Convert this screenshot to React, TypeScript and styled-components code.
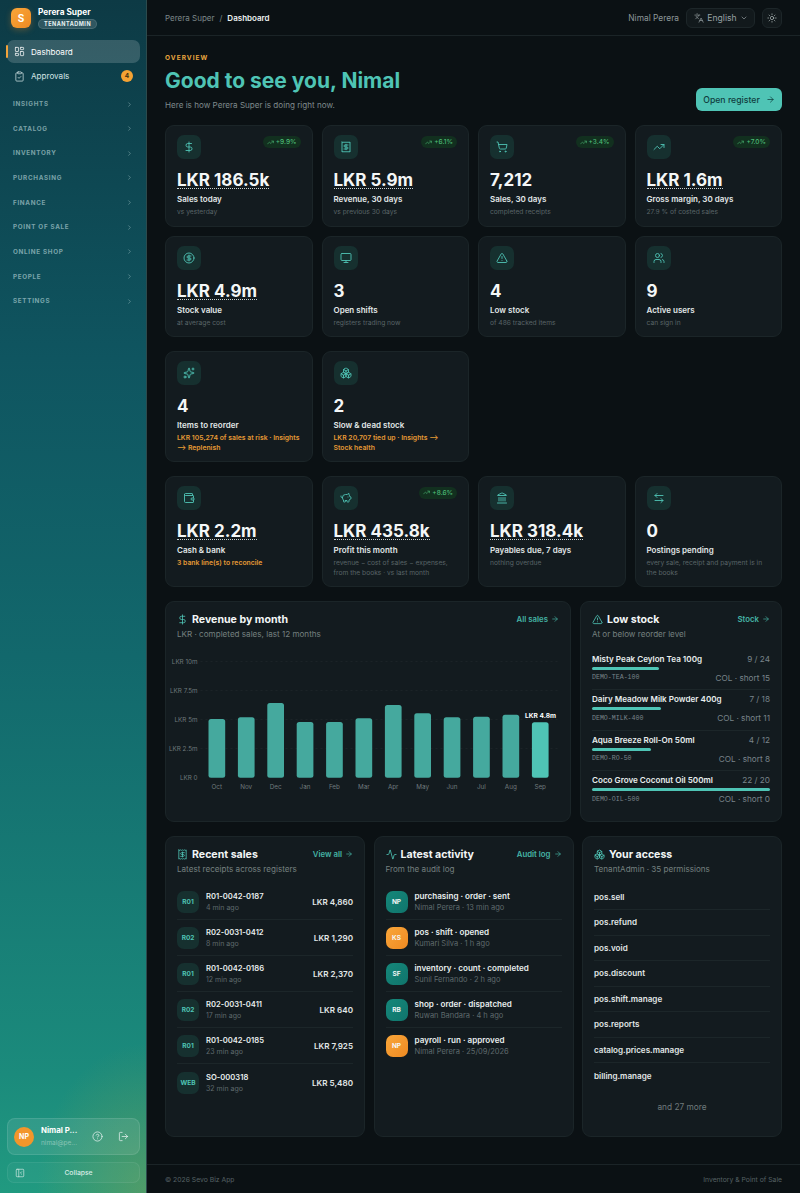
import styled, { createGlobalStyle } from "styled-components";
import {
  Activity,
  ArrowLeftRight,
  ArrowRight,
  Boxes,
  ChevronDown,
  ChevronRight,
  CircleDollarSign,
  CircleHelp,
  ClipboardCheck,
  DollarSign,
  Landmark,
  Languages,
  LayoutDashboard,
  LogOut,
  Monitor,
  PanelLeftClose,
  PiggyBank,
  Receipt,
  ShoppingCart,
  Sparkles,
  Sun,
  TrendingUp,
  TriangleAlert,
  Users,
  Wallet,
} from "lucide-react";

const GlobalStyle = createGlobalStyle`
  html, body { margin: 0; padding: 0; background: #0b1114; }
  body {
    font-family: Inter, "Noto Sans", "Liberation Sans", sans-serif;
    color: #e8eeee;
  }
  * { box-sizing: border-box; }
`;

const navGroups = [
  "Insights",
  "Catalog",
  "Inventory",
  "Purchasing",
  "Finance",
  "Point of sale",
  "Online shop",
  "People",
  "Settings",
];

const topStats = [
  { icon: DollarSign, value: "LKR 186.5k", money: true, label: "Sales today", sub: "vs yesterday", trend: "+9.9%" },
  { icon: Receipt, value: "LKR 5.9m", money: true, label: "Revenue, 30 days", sub: "vs previous 30 days", trend: "+6.1%" },
  { icon: ShoppingCart, value: "7,212", label: "Sales, 30 days", sub: "completed receipts", trend: "+3.4%" },
  { icon: TrendingUp, value: "LKR 1.6m", money: true, label: "Gross margin, 30 days", sub: "27.9 % of costed sales", trend: "+7.0%" },
  { icon: CircleDollarSign, value: "LKR 4.9m", money: true, label: "Stock value", sub: "at average cost" },
  { icon: Monitor, value: "3", label: "Open shifts", sub: "registers trading now" },
  { icon: TriangleAlert, value: "4", label: "Low stock", sub: "of 486 tracked items" },
  { icon: Users, value: "9", label: "Active users", sub: "can sign in" },
];

const insightStats = [
  { icon: Sparkles, value: "4", label: "Items to reorder", sub: "LKR 105,274 of sales at risk · Insights ⟶ Replenish", warn: true },
  { icon: Boxes, value: "2", label: "Slow & dead stock", sub: "LKR 20,707 tied up · Insights ⟶ Stock health", warn: true },
];

const financeStats = [
  { icon: Wallet, value: "LKR 2.2m", money: true, label: "Cash & bank", sub: "3 bank line(s) to reconcile", warn: true },
  { icon: PiggyBank, value: "LKR 435.8k", money: true, label: "Profit this month", sub: "revenue − cost of sales − expenses, from the books · vs last month", trend: "+8.6%" },
  { icon: Landmark, value: "LKR 318.4k", money: true, label: "Payables due, 7 days", sub: "nothing overdue" },
  { icon: ArrowLeftRight, value: "0", label: "Postings pending", sub: "every sale, receipt and payment is in the books" },
];

const bars = [
  { month: "Oct", top: 719 },
  { month: "Nov", top: 717.3 },
  { month: "Dec", top: 703 },
  { month: "Jan", top: 722 },
  { month: "Feb", top: 722 },
  { month: "Mar", top: 718.3 },
  { month: "Apr", top: 705 },
  { month: "May", top: 713.3 },
  { month: "Jun", top: 717.3 },
  { month: "Jul", top: 716.7 },
  { month: "Aug", top: 714.7 },
  { month: "Sep", top: 722.3 },
];

const axis = [
  { label: "LKR 10m", y: 661.5 },
  { label: "LKR 7.5m", y: 690.5 },
  { label: "LKR 5m", y: 719.5 },
  { label: "LKR 2.5m", y: 748.5 },
  { label: "LKR 0", y: 777.5 },
];

const lowStock = [
  { name: "Misty Peak Ceylon Tea 100g", count: "9 / 24", sku: "DEMO-TEA-100", short: "COL · short 15", ratio: 9 / 24 },
  { name: "Dairy Meadow Milk Powder 400g", count: "7 / 18", sku: "DEMO-MILK-400", short: "COL · short 11", ratio: 7 / 18 },
  { name: "Aqua Breeze Roll-On 50ml", count: "4 / 12", sku: "DEMO-RO-50", short: "COL · short 8", ratio: 4 / 12 },
  { name: "Coco Grove Coconut Oil 500ml", count: "22 / 20", sku: "DEMO-OIL-500", short: "COL · short 0", ratio: 1 },
];

const sales = [
  { reg: "R01", no: "R01-0042-0187", ago: "4 min ago", total: "LKR 4,860" },
  { reg: "R02", no: "R02-0031-0412", ago: "8 min ago", total: "LKR 1,290" },
  { reg: "R01", no: "R01-0042-0186", ago: "12 min ago", total: "LKR 2,370" },
  { reg: "R02", no: "R02-0031-0411", ago: "17 min ago", total: "LKR 640" },
  { reg: "R01", no: "R01-0042-0185", ago: "23 min ago", total: "LKR 7,925" },
  { reg: "WEB", no: "SO-000318", ago: "32 min ago", total: "LKR 5,480" },
];

const activity = [
  { initials: "NP", tone: "teal", what: "purchasing · order · sent", who: "Nimal Perera · 13 min ago" },
  { initials: "KS", tone: "amber", what: "pos · shift · opened", who: "Kumari Silva · 1 h ago" },
  { initials: "SF", tone: "teal", what: "inventory · count · completed", who: "Sunil Fernando · 2 h ago" },
  { initials: "RB", tone: "teal", what: "shop · order · dispatched", who: "Ruwan Bandara · 4 h ago" },
  { initials: "NP", tone: "amber", what: "payroll · run · approved", who: "Nimal Perera · 25/09/2026" },
];

const permissions = [
  "pos.sell",
  "pos.refund",
  "pos.void",
  "pos.discount",
  "pos.shift.manage",
  "pos.reports",
  "catalog.prices.manage",
  "billing.manage",
];

type Stat = {
  icon: typeof DollarSign;
  value: string;
  money?: boolean;
  label: string;
  sub: string;
  trend?: string;
  warn?: boolean;
};

const StatCard = ({ icon: Icon, value, money, label, sub, trend, warn }: Stat) => (
  <Card>
    <CardTop>
      <IconTile>
        <Icon size={12} strokeWidth={1.8} />
      </IconTile>
      {trend && (
        <Trend>
          <TrendingUp size={7} strokeWidth={2} />
          {trend}
        </Trend>
      )}
    </CardTop>
    <Value $money={money}>{value}</Value>
    <Label>{label}</Label>
    <Sub $warn={warn}>{sub}</Sub>
  </Card>
);

const PanelHeader = ({
  icon: Icon,
  title,
  sub,
  link,
}: {
  icon: typeof DollarSign;
  title: string;
  sub: string;
  link?: string;
}) => (
  <PanelHead>
    <div>
      <PanelTitle>
        <Icon size={11} strokeWidth={1.8} />
        {title}
      </PanelTitle>
      <PanelSub>{sub}</PanelSub>
    </div>
    {link && (
      <PanelLink>
        {link}
        <ArrowRight size={8} strokeWidth={2} />
      </PanelLink>
    )}
  </PanelHead>
);

const RevenueChart = () => (
  <ChartSvg viewBox="165.5 650 405 160" width="405" height="160">
    {axis.map((a) => (
      <g key={a.label}>
        {a.label !== "LKR 0" && (
          <line x1="200" x2="560" y1={a.y} y2={a.y} stroke="#ffffff" strokeOpacity="0.04" strokeDasharray="2 3" />
        )}
        <text x="197" y={a.y + 2.3} textAnchor="end" fontSize="6.3" fill="#6f7a7c">
          {a.label}
        </text>
      </g>
    ))}
    {bars.map((b, i) => {
      const x = 208 + i * 29.4;
      const last = i === bars.length - 1;
      return (
        <g key={b.month}>
          <rect x={x} y={b.top} width="16.7" height={777.7 - b.top} rx="2.5" fill={last ? "#4fc4b5" : "#45a99e"} />
          <text x={x + 8.3} y="789.3" textAnchor="middle" fontSize="6.3" fill="#6f7a7c">
            {b.month}
          </text>
        </g>
      );
    })}
    <text x="540" y="718" textAnchor="middle" fontSize="6.6" fontWeight="700" fill="#ffffff">
      LKR 4.8m
    </text>
  </ChartSvg>
);

export default function App() {
  return (
    <>
      <GlobalStyle />
      <Shell>
        <Sidebar>
          <Brand>
            <BrandMark>S</BrandMark>
            <div>
              <BrandName>Perera Super</BrandName>
              <RoleBadge>TENANTADMIN</RoleBadge>
            </div>
          </Brand>
          <Nav>
            <NavItem $active>
              <LayoutDashboard size={11} strokeWidth={1.6} />
              Dashboard
            </NavItem>
            <NavItem>
              <ClipboardCheck size={11} strokeWidth={1.6} />
              Approvals
              <CountBadge>4</CountBadge>
            </NavItem>
            <NavGroups>
              {navGroups.map((g) => (
                <NavGroup key={g}>
                  {g}
                  <ChevronRight size={7} strokeWidth={2} />
                </NavGroup>
              ))}
            </NavGroups>
          </Nav>
          <UserCard>
            <UserAvatar>NP</UserAvatar>
            <UserText>
              <UserName>Nimal P...</UserName>
              <UserMail>nimal@pe...</UserMail>
            </UserText>
            <UserAction>
              <CircleHelp size={11} strokeWidth={1.6} />
            </UserAction>
            <UserAction>
              <LogOut size={11} strokeWidth={1.6} />
            </UserAction>
          </UserCard>
          <CollapseButton>
            <PanelLeftClose size={10} strokeWidth={1.6} />
            <CollapseLabel>Collapse</CollapseLabel>
          </CollapseButton>
        </Sidebar>

        <Main>
          <TopBar>
            <Crumbs>
              <span>Perera Super</span>
              <span>/</span>
              <CrumbNow>Dashboard</CrumbNow>
            </Crumbs>
            <TopRight>
              <TopUser>Nimal Perera</TopUser>
              <LangSelect>
                <Languages size={10} strokeWidth={1.6} />
                English
                <ChevronDown size={8} strokeWidth={2} />
              </LangSelect>
              <ThemeButton>
                <Sun size={10} strokeWidth={1.6} />
              </ThemeButton>
            </TopRight>
          </TopBar>

          <Content>
            <Hero>
              <div>
                <Eyebrow>OVERVIEW</Eyebrow>
                <Greeting>Good to see you, Nimal</Greeting>
                <HeroSub>Here is how Perera Super is doing right now.</HeroSub>
              </div>
              <RegisterButton>
                Open register
                <ArrowRight size={9} strokeWidth={2} />
              </RegisterButton>
            </Hero>

            <StatGrid>
              {topStats.map((s) => (
                <StatCard key={s.label} {...s} />
              ))}
            </StatGrid>
            <StatGrid>
              {insightStats.map((s) => (
                <StatCard key={s.label} {...s} />
              ))}
            </StatGrid>
            <StatGrid>
              {financeStats.map((s) => (
                <StatCard key={s.label} {...s} />
              ))}
            </StatGrid>

            <ChartRow>
              <Panel>
                <PanelHeader icon={DollarSign} title="Revenue by month" sub="LKR · completed sales, last 12 months" link="All sales" />
                <RevenueChart />
              </Panel>
              <Panel>
                <PanelHeader icon={TriangleAlert} title="Low stock" sub="At or below reorder level" link="Stock" />
                <StockList>
                  {lowStock.map((s) => (
                    <StockRow key={s.sku}>
                      <StockLine>
                        <StockName>{s.name}</StockName>
                        <StockCount>{s.count}</StockCount>
                      </StockLine>
                      <StockTrack>
                        <StockFill style={{ width: `${s.ratio * 100}%` }} />
                      </StockTrack>
                      <StockLine>
                        <StockSku>{s.sku}</StockSku>
                        <StockCount>{s.short}</StockCount>
                      </StockLine>
                    </StockRow>
                  ))}
                </StockList>
              </Panel>
            </ChartRow>

            <TripleRow>
              <Panel>
                <PanelHeader icon={Receipt} title="Recent sales" sub="Latest receipts across registers" link="View all" />
                <FeedList>
                  {sales.map((s) => (
                    <FeedRow key={s.no}>
                      <RegChip>{s.reg}</RegChip>
                      <FeedText>
                        <FeedTitle>{s.no}</FeedTitle>
                        <FeedMeta>{s.ago}</FeedMeta>
                      </FeedText>
                      <Amount>{s.total}</Amount>
                    </FeedRow>
                  ))}
                </FeedList>
              </Panel>
              <Panel>
                <PanelHeader icon={Activity} title="Latest activity" sub="From the audit log" link="Audit log" />
                <FeedList>
                  {activity.map((a) => (
                    <FeedRow key={a.what}>
                      <ActorChip $tone={a.tone}>{a.initials}</ActorChip>
                      <FeedText>
                        <ActivityTitle>{a.what}</ActivityTitle>
                        <ActivityMeta>{a.who}</ActivityMeta>
                      </FeedText>
                    </FeedRow>
                  ))}
                </FeedList>
              </Panel>
              <Panel>
                <PanelHeader icon={Boxes} title="Your access" sub="TenantAdmin · 35 permissions" />
                <PermList>
                  {permissions.map((p) => (
                    <PermRow key={p}>{p}</PermRow>
                  ))}
                </PermList>
                <PermMore>and 27 more</PermMore>
              </Panel>
            </TripleRow>
          </Content>

          <Footer>
            <span>© 2026 Sevo Biz App</span>
            <span>Inventory &amp; Point of Sale</span>
          </Footer>
        </Main>
      </Shell>
    </>
  );
}

const Shell = styled.div`
  display: grid;
  grid-template-columns: 147px 1fr;
  min-height: 1193px;
`;

const Sidebar = styled.aside`
  display: flex;
  flex-direction: column;
  padding: 8px 6px 10px 7px;
  border-right: 1px solid #2c4a4c;
  background:
    radial-gradient(110px 150px at 100% 100%, rgba(150, 160, 70, 0.4), transparent 100%),
    linear-gradient(180deg, #0d3a45 0%, #0f5560 30%, #12686c 55%, #1b8b7c 90%, #219a80 100%);
`;

const Brand = styled.div`
  display: flex;
  gap: 7px;
  padding: 0 4px;
`;

const BrandMark = styled.div`
  display: flex;
  align-items: center;
  justify-content: center;
  width: 20px;
  height: 20px;
  border-radius: 6px;
  background: linear-gradient(135deg, #f9a63a, #ee8a22);
  box-shadow: 0 2px 6px rgba(240, 140, 40, 0.3);
  color: #fff;
  font-size: 10px;
  font-weight: 700;
`;

const BrandName = styled.div`
  margin-top: -1px;
  color: #fff;
  font-size: 8.3px;
  font-weight: 700;
  line-height: 11px;
`;

const RoleBadge = styled.div`
  width: fit-content;
  height: 10px;
  margin-top: 1px;
  padding: 0 5px;
  border: 1px solid rgba(255, 255, 255, 0.12);
  border-radius: 5px;
  background: rgba(255, 255, 255, 0.14);
  color: #e8f2f2;
  font-size: 5.5px;
  font-weight: 700;
  letter-spacing: 0.09em;
  line-height: 8px;
`;

const Nav = styled.nav`
  flex: 1;
  margin-top: 11px;
`;

const NavItem = styled.div<{ $active?: boolean }>`
  position: relative;
  display: flex;
  align-items: center;
  gap: 6px;
  height: 23px;
  margin-bottom: 1.5px;
  padding: 0 7px;
  border-radius: 7px;
  background: ${(p) => (p.$active ? "rgba(255, 255, 255, 0.17)" : "transparent")};
  color: ${(p) => (p.$active ? "#ffffff" : "#d3e4e5")};
  font-size: 8.1px;
  font-weight: 400;

  &::before {
    content: "";
    display: ${(p) => (p.$active ? "block" : "none")};
    position: absolute;
    left: -1px;
    top: 5px;
    width: 1.5px;
    height: 13px;
    border-radius: 1px;
    background: #f2a33a;
  }
`;

const CountBadge = styled.span`
  display: flex;
  align-items: center;
  justify-content: center;
  width: 12px;
  height: 12px;
  margin-left: auto;
  border-radius: 50%;
  background: #f4a233;
  color: #40300f;
  font-size: 6.5px;
  font-weight: 700;
`;

const NavGroups = styled.div`
  margin-top: 4.25px;
`;

const NavGroup = styled.div`
  display: flex;
  align-items: center;
  justify-content: space-between;
  height: 24.65px;
  padding: 0 7px 0 6px;
  color: rgba(205, 230, 232, 0.58);
  font-size: 6.3px;
  font-weight: 700;
  letter-spacing: 0.11em;
  text-transform: uppercase;
`;

const UserCard = styled.div`
  display: flex;
  align-items: center;
  gap: 7px;
  height: 37px;
  padding: 0 10px 0 6px;
  border: 1px solid rgba(255, 255, 255, 0.1);
  border-radius: 8px;
  background: rgba(255, 255, 255, 0.09);
`;

const UserAvatar = styled.div`
  flex: none;
  display: flex;
  align-items: center;
  justify-content: center;
  width: 20px;
  height: 20px;
  border-radius: 50%;
  background: #f2962b;
  color: #fff;
  font-size: 7px;
  font-weight: 700;
`;

const UserText = styled.div`
  flex: 1;
  min-width: 0;
  white-space: nowrap;
`;

const UserName = styled.div`
  color: #fff;
  font-size: 7.8px;
  font-weight: 700;
  line-height: 11px;
`;

const UserMail = styled.div`
  margin-top: 3px;
  color: rgba(255, 255, 255, 0.4);
  font-size: 6.5px;
  line-height: 9px;
`;

const UserAction = styled.span`
  display: flex;
  margin-left: 8px;
  color: #eaf4f2;
`;

const CollapseButton = styled.div`
  display: flex;
  align-items: center;
  height: 21px;
  margin-top: 7px;
  padding: 0 7px;
  border: 1px solid rgba(255, 255, 255, 0.07);
  border-radius: 7px;
  background: rgba(255, 255, 255, 0.03);
  color: #d8ece6;
`;

const CollapseLabel = styled.span`
  flex: 1;
  text-align: center;
  font-size: 6.8px;
  font-weight: 500;
`;

const Main = styled.main`
  display: flex;
  flex-direction: column;
  min-width: 0;
  background: #0b1114;
`;

const TopBar = styled.header`
  display: flex;
  align-items: center;
  justify-content: space-between;
  height: 36px;
  padding: 0 18px;
  border-bottom: 1px solid #1b2427;
`;

const Crumbs = styled.div`
  display: flex;
  gap: 5px;
  color: #7c8789;
  font-size: 8px;
`;

const CrumbNow = styled.span`
  color: #eef3f3;
  font-weight: 600;
`;

const TopRight = styled.div`
  display: flex;
  align-items: center;
  gap: 7px;
`;

const TopUser = styled.span`
  color: #8d9799;
  font-size: 8.4px;
`;

const LangSelect = styled.div`
  display: flex;
  align-items: center;
  justify-content: space-between;
  width: 69px;
  height: 20px;
  padding: 0 6px 0 7px;
  border: 1px solid #1d2629;
  border-radius: 6px;
  background: #12191c;
  color: #98a2a4;
  font-size: 8.6px;
`;

const ThemeButton = styled.div`
  display: flex;
  align-items: center;
  justify-content: center;
  width: 20px;
  height: 20px;
  border: 1px solid #1d2629;
  border-radius: 6px;
  background: #12191c;
  color: #b8c2c3;
`;

const Content = styled.div`
  flex: 1;
  display: flex;
  flex-direction: column;
  padding: 17px 18px 27px;
`;

const Hero = styled.div`
  display: flex;
  align-items: flex-end;
  justify-content: space-between;
  margin-bottom: 14px;
`;

const Eyebrow = styled.div`
  color: #e9a63f;
  font-size: 6.5px;
  font-weight: 700;
  letter-spacing: 0.16em;
  line-height: 10px;
`;

const Greeting = styled.h1`
  margin: 4px 0 0;
  color: #4fc4b5;
  font-size: 21px;
  font-weight: 700;
  line-height: 28px;
`;

const HeroSub = styled.div`
  margin-top: 4px;
  color: #7f8a8c;
  font-size: 8.1px;
  line-height: 12px;
`;

const RegisterButton = styled.div`
  display: flex;
  align-items: center;
  justify-content: center;
  gap: 6px;
  width: 86px;
  height: 23px;
  border-radius: 6px;
  background: #4fc4b5;
  color: #0f3d3e;
  font-size: 8.7px;
  font-weight: 500;
`;

const StatGrid = styled.div`
  display: grid;
  grid-template-columns: repeat(4, 1fr);
  gap: 9px;
  margin-bottom: 13.5px;
`;

const Card = styled.div`
  padding: 9px 11px 8.5px;
  border: 1px solid #1b2528;
  border-radius: 9px;
  background: #131b1f;
`;

const CardTop = styled.div`
  display: flex;
  align-items: flex-start;
  justify-content: space-between;
`;

const IconTile = styled.div`
  display: flex;
  align-items: center;
  justify-content: center;
  width: 24px;
  height: 24px;
  border-radius: 7px;
  background: #16302f;
  color: #4fc4b5;
`;

const Trend = styled.span`
  display: flex;
  align-items: center;
  gap: 2px;
  height: 12px;
  margin: 1px 0 0;
  padding: 0 4px;
  border-radius: 6px;
  background: #12301f;
  color: #4cba76;
  font-size: 6.5px;
  font-weight: 500;
`;

const Value = styled.div<{ $money?: boolean }>`
  display: table;
  margin-top: 13px;
  border-bottom: 1px dotted ${(p) => (p.$money ? "#c8d0d0" : "transparent")};
  color: #f4f7f7;
  font-size: 17px;
  font-weight: 700;
  line-height: 16px;
`;

const Label = styled.div`
  margin-top: 4px;
  color: #e2e8e8;
  font-size: 8px;
  font-weight: 600;
  line-height: 12px;
`;

const Sub = styled.div<{ $warn?: boolean }>`
  margin-top: 2px;
  color: ${(p) => (p.$warn ? "#e59a35" : "#596467")};
  font-size: ${(p) => (p.$warn ? "6.85px" : "6.7px")};
  font-weight: ${(p) => (p.$warn ? 600 : 400)};
  line-height: 10px;
`;

const ChartRow = styled.div`
  display: grid;
  grid-template-columns: 406px 1fr;
  gap: 9px;
  margin-bottom: 14px;
`;

const TripleRow = styled.div`
  flex: 1;
  display: grid;
  grid-template-columns: repeat(3, 1fr);
  gap: 8.5px;
`;

const Panel = styled.section`
  padding: 11px 11px 9px;
  border: 1px solid #1b2528;
  border-radius: 9px;
  background: #131b1f;
`;

const PanelHead = styled.div`
  display: flex;
  align-items: flex-start;
  justify-content: space-between;
`;

const PanelTitle = styled.div`
  display: flex;
  align-items: center;
  gap: 4px;
  color: #f2f6f6;
  font-size: 10.6px;
  font-weight: 700;
  line-height: 14px;

  svg {
    color: #4fc4b5;
  }
`;

const PanelSub = styled.div`
  margin-top: 1px;
  color: #75807f;
  font-size: 8.1px;
  line-height: 12px;
`;

const PanelLink = styled.div`
  display: flex;
  align-items: center;
  gap: 3px;
  color: #45b3a5;
  font-size: 7.8px;
  font-weight: 600;
  line-height: 12px;
`;

const ChartSvg = styled.svg`
  display: block;
  margin: 10px 0 0 -11px;
`;

const StockList = styled.div`
  margin-top: 10px;
`;

const StockRow = styled.div`
  height: 40.5px;
  padding: 3px 0 3.5px;
  border-bottom: 1px solid #1c2629;

  &:last-child {
    border-bottom: none;
  }
`;

const StockLine = styled.div`
  display: flex;
  align-items: center;
  justify-content: space-between;
  height: 12px;
`;

const StockName = styled.span`
  color: #e8eeee;
  font-size: 8.1px;
  font-weight: 600;
`;

const StockCount = styled.span`
  color: #79848a;
  font-size: 8.2px;
`;

const StockTrack = styled.div`
  height: 3px;
  margin: 2px 0;
`;

const StockFill = styled.div`
  height: 100%;
  border-radius: 2px;
  background: #4fc4b5;
`;

const StockSku = styled.span`
  color: #79848a;
  font-family: "Liberation Mono", "DejaVu Sans Mono", monospace;
  font-size: 6.6px;
`;

const FeedList = styled.div`
  margin-top: 9.5px;
`;

const FeedRow = styled.div`
  display: flex;
  align-items: center;
  gap: 7px;
  height: 36.1px;
  border-bottom: 1px solid #1c2629;

  &:last-child {
    border-bottom: none;
  }
`;

const RegChip = styled.div`
  flex: none;
  display: flex;
  align-items: center;
  justify-content: center;
  width: 22px;
  height: 22px;
  border-radius: 7px;
  background: #16302f;
  color: #4fc4b5;
  font-size: 6.5px;
  font-weight: 700;
`;

const ActorChip = styled.div<{ $tone: string }>`
  flex: none;
  display: flex;
  align-items: center;
  justify-content: center;
  width: 22px;
  height: 22px;
  border-radius: 7px;
  background: ${(p) =>
    p.$tone === "amber"
      ? "linear-gradient(135deg, #f9a63a, #ee8a22)"
      : "linear-gradient(135deg, #15877a, #10756c)"};
  color: #f4f7f7;
  font-size: 6.5px;
  font-weight: 700;
`;

const FeedText = styled.div`
  flex: 1;
  min-width: 0;
`;

const FeedTitle = styled.div`
  color: #e8eeee;
  font-size: 7.6px;
  font-weight: 600;
  line-height: 11px;
`;

const FeedMeta = styled.div`
  color: #5f6a6d;
  font-size: 7px;
  line-height: 11px;
`;

const ActivityTitle = styled(FeedTitle)`
  font-size: 8.1px;
`;

const ActivityMeta = styled(FeedMeta)`
  font-size: 7.5px;
`;

const Amount = styled.span`
  color: #e2e8e8;
  font-size: 8.1px;
  font-weight: 600;
`;

const PermList = styled.div`
  margin-top: 10px;
`;

const PermRow = styled.div`
  display: flex;
  align-items: center;
  height: 25.5px;
  border-bottom: 1px solid #1c2629;
  color: #e2e8e8;
  font-size: 8.1px;
  font-weight: 600;

  &:last-child {
    border-bottom: none;
  }
`;

const PermMore = styled.div`
  margin-top: 12px;
  color: #6f7a7c;
  font-size: 8.3px;
  line-height: 12px;
  text-align: center;
`;

const Footer = styled.footer`
  display: flex;
  align-items: center;
  justify-content: space-between;
  height: 29px;
  padding: 0 18px;
  border-top: 1px solid #1b2427;
  color: #566164;
  font-size: 6.8px;
`;
